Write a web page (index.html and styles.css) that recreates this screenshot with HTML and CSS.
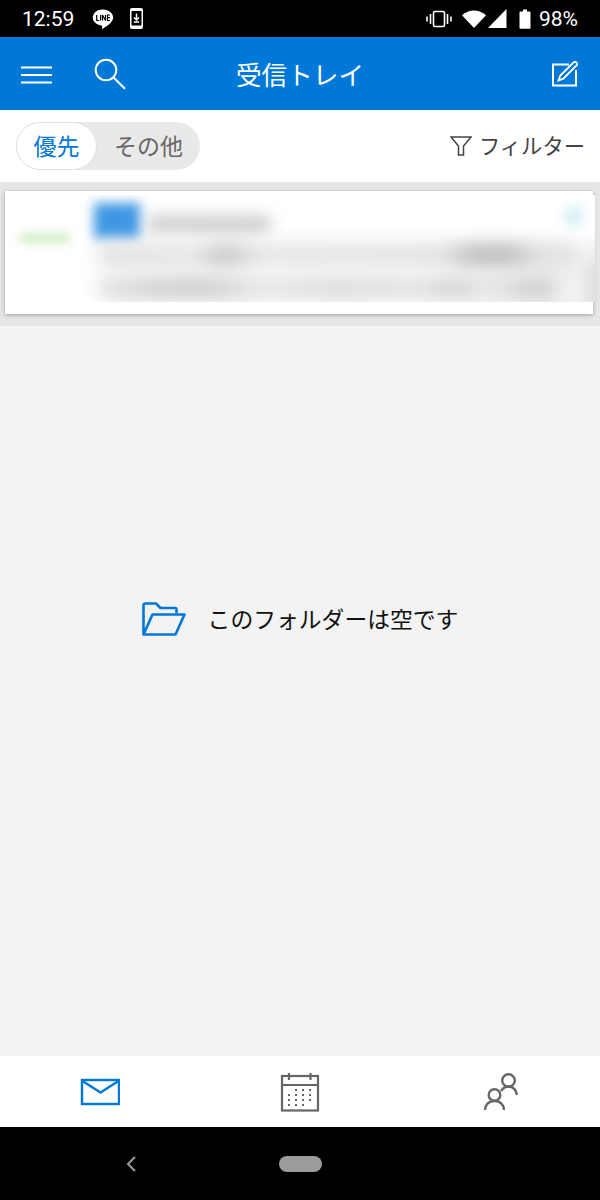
FILE: index.html
```html
<!DOCTYPE html>
<html lang="ja">
<head>
    <meta charset="UTF-8">
    <meta name="viewport" content="width=device-width, initial-scale=1.0">
    <title>受信トレイ</title>
    <link rel="stylesheet" href="styles.css">
</head>
<body>
    <div class="status-bar">
        <div class="status-left">
            <span class="clock">12:59</span>
            <svg class="line-icon" width="22" height="22" viewBox="0 0 22 22">
                <path d="M11 1.500C5.200 1.500.8 5 .8 9.600c0 4.200 3.700 7.400 8.600 7.900.6.100.8.400.7 1l-.2 1.900c0 .4.300.5.700.3 2.600-1.400 9.900-5.500 10.600-10.600C21.200 5 16.800 1.500 11 1.500z" fill="#fff"/>
                <path d="M4.700 7v5.500h2.500M8.600 7v5.500M10.500 12.500V7l3 5.500V7M18 7h-2.500v5.500H18M15.500 9.700H18" fill="none" stroke="#000" stroke-width="1.200"/>
            </svg>
            <svg width="16" height="24" viewBox="0 0 16 24">
                <rect x="1" y="1" width="13" height="21" rx="2" fill="#fff"/>
                <rect x="2.500" y="4" width="10" height="14.500" fill="#000"/>
                <path d="M7.500 6.500v6M5 10.500l2.500 2.500 2.500-2.500M4.800 15h5.400" fill="none" stroke="#fff" stroke-width="1.500"/>
            </svg>
        </div>
        <div class="status-right">
            <svg width="26" height="20" viewBox="0 0 26 20">
                <rect x="7.500" y="2.500" width="11" height="15" rx="1.500" fill="none" stroke="#fff" stroke-width="1.600"/>
                <path d="M4.500 5v10M21.500 5v10M1 7.500v5M25 7.500v5" stroke="#fff" stroke-width="1.600"/>
            </svg>
            <svg class="wifi-icon" width="24" height="18" viewBox="0 0 24 18">
                <path d="M0 5.200C6.800-1.200 17.200-1.200 24 5.200L12 18z" fill="#fff"/>
            </svg>
            <svg class="signal-icon" width="19" height="19" viewBox="0 0 19 19">
                <path d="M0 19L18.500 0v19z" fill="#fff"/>
            </svg>
            <svg class="battery-icon" width="12" height="20" viewBox="0 0 12 20">
                <path d="M1.500 2.500H4V0.500h4v2h2.500a1 1 0 0 1 1 1V18.800a1 1 0 0 1-1 1h-9a1 1 0 0 1-1-1V3.500a1 1 0 0 1 1-1z" fill="#fff"/>
            </svg>
            <span class="battery-text">98%</span>
        </div>
    </div>

    <header class="app-bar">
        <div class="app-bar-left">
            <svg class="menu-icon" width="31" height="18" viewBox="0 0 31 18">
                <path d="M0 1.500h31M0 9h31M0 16.500h31" stroke="#fff" stroke-width="2"/>
            </svg>
            <svg width="32" height="32" viewBox="0 0 32 32">
                <circle cx="12" cy="12" r="10.300" fill="none" stroke="#fff" stroke-width="2"/>
                <path d="M19.500 19.500L31 30.800" stroke="#fff" stroke-width="2"/>
            </svg>
        </div>
        <h1 class="app-title">受信トレイ</h1>
        <svg class="compose-icon" width="26" height="26" viewBox="0 0 26 26">
            <path d="M17 3.500H1v21h23V9" fill="none" stroke="#fff" stroke-width="2"/>
            <path d="M6.500 19.500l1.800-5L21.500 1.500c1-.8 2.200-.7 3 .1s.8 2 0 2.900L11.300 17.700z" fill="none" stroke="#fff" stroke-width="1.800"/>
        </svg>
    </header>

    <div class="filter-row">
        <div class="pivot">
            <span class="pivot-item active">優先</span>
            <span class="pivot-item">その他</span>
        </div>
        <div class="filter">
            <svg width="22" height="20" viewBox="0 0 22 20">
                <path d="M1 1h20l-7.500 9v9h-5v-9z" fill="none" stroke="#444" stroke-width="1.500"/>
            </svg>
            <span class="filter-label">フィルター</span>
        </div>
    </div>

    <div class="card-band">
        <div class="card">
            <div class="blur-panel">
                <div class="blur-green"></div>
                <div class="blur-body">
                    <div class="blur-head">
                        <div class="blur-avatar"></div>
                        <div class="blur-name"></div>
                        <div class="blur-dot"></div>
                    </div>
                    <div class="blur-line"></div>
                    <div class="blur-line short"></div>
                </div>
            </div>
        </div>
    </div>

    <main class="empty">
        <svg width="44" height="34" viewBox="0 0 44 34">
            <path d="M1.500 32.500V3a1.500 1.500 0 0 1 1.500-1.500h11l4.500 4.500h14.500a1.500 1.500 0 0 1 1.500 1.500v3.500M1.500 32.500h32L42.500 12.500H10.500z" fill="none" stroke="#0078d7" stroke-width="2.600" stroke-linejoin="round"/>
        </svg>
        <span class="empty-text">このフォルダーは空です</span>
    </main>

    <nav class="tab-bar">
        <svg width="40" height="28" viewBox="0 0 40 28">
            <rect x="2" y="2" width="37" height="24" fill="none" stroke="#0078d7" stroke-width="2.400"/>
            <path d="M2.500 3L20.500 14.500l18-11.500" fill="none" stroke="#0078d7" stroke-width="2.400"/>
        </svg>
        <svg width="40" height="40" viewBox="0 0 40 40">
            <rect x="2" y="4" width="36" height="34.500" fill="none" stroke="#666" stroke-width="2.200"/>
            <path d="M2 13h36M9 1v7M30.500 1v7" stroke="#666" stroke-width="2.200"/>
            <path d="M15 18h2M22 18h2M29 18h2M8 23h2M15 23h2M22 23h2M29 23h2M8 28h2M15 28h2M22 28h2M29 28h2M8 33h2M15 33h2M22 33h2" stroke="#666" stroke-width="2.200"/>
        </svg>
        <svg width="36" height="40" viewBox="0 0 36 40">
            <circle cx="12.500" cy="23" r="5.800" fill="none" stroke="#666" stroke-width="2.400"/>
            <path d="M3 38c0-5 3.500-9 9.500-9s9.500 4 9.500 9" fill="none" stroke="#666" stroke-width="2.400"/>
            <circle cx="26.500" cy="8.500" r="6.300" fill="none" stroke="#666" stroke-width="2.400"/>
            <path d="M19 19c2-3 4.500-4.500 7.500-4.500 4.500 0 7.500 3.500 8.500 8.500" fill="none" stroke="#666" stroke-width="2.400"/>
        </svg>
    </nav>

    <div class="nav-bar">
        <svg class="nav-back" width="12" height="18" viewBox="0 0 12 18">
            <path d="M10 2L3 9l7 7" fill="none" stroke="#9b9b9b" stroke-width="2"/>
        </svg>
        <div class="nav-home"></div>
    </div>
</body>
</html>
```

FILE: styles.css
```css
* {
    box-sizing: border-box;
}

body {
    margin: 0;
    width: 600px;
    height: 1200px;
    display: flex;
    flex-direction: column;
    overflow: hidden;
    background-color: #f3f3f3;
    font-family: "Noto Sans CJK JP", "Noto Sans", sans-serif;
}

.status-bar {
    height: 37px;
    background-color: #000;
    color: #fff;
    display: flex;
    justify-content: space-between;
    align-items: center;
    padding: 0 22px;
    font-family: Roboto, sans-serif;
    font-size: 21px;
}

.status-left,
.status-right {
    display: flex;
    align-items: center;
}

.status-left {
    gap: 15px;
}

.clock {
    margin-right: 3px;
}

.wifi-icon {
    margin-left: 10px;
}

.signal-icon {
    margin-left: 2px;
}

.battery-icon {
    margin: 0 8px 0 12px;
}

.app-bar {
    height: 73px;
    background-color: #0078d7;
    display: flex;
    justify-content: space-between;
    align-items: center;
    padding: 0 22px 0 21px;
    position: relative;
}

.app-bar-left {
    display: flex;
    align-items: center;
    gap: 42px;
}

.menu-icon {
    margin-top: 2px;
}

.app-title {
    margin: 0;
    color: #fff;
    font-size: 25.600px;
    font-weight: 400;
    position: absolute;
    left: 236px;
    top: 18px;
    line-height: 37px;
}

.filter-row {
    height: 72px;
    background-color: #fff;
    display: flex;
    justify-content: space-between;
    align-items: center;
    padding: 0 15px 0 16px;
}

.pivot {
    display: flex;
    height: 48px;
    width: 184px;
    border-radius: 24px;
    background-color: #e9e9e9;
    font-size: 23px;
    color: #666;
}

.pivot-item {
    display: flex;
    align-items: center;
    justify-content: center;
    flex: 1;
    padding-bottom: 2px;
}

.pivot-item.active {
    flex: none;
    width: 81px;
    background-color: #fff;
    border: 1px solid #e2e2e2;
    border-radius: 24px;
    color: #0078d7;
}

.filter {
    display: flex;
    align-items: center;
    gap: 7px;
    font-size: 21.300px;
    color: #444;
    margin-top: -1px;
}

.filter-label {
    padding-bottom: 3px;
}

.card-band {
    height: 144px;
    background-color: #e6e6e6;
    padding: 9px 7px 12px 5px;
}

.card {
    height: 123px;
    padding-top: 4px;
    background-color: #fff;
    box-shadow: 0 1px 4px rgba(0, 0, 0, 0.3);
}

.blur-panel {
    height: 107px;
    margin-right: -2px;
    padding-left: 15px;
    display: flex;
    align-items: flex-start;
    background: linear-gradient(to bottom, #fff 35%, rgba(255, 255, 255, 0) 70%), linear-gradient(to right, #fff 75%, #f1f1f1 97%, #dfe0e2);
    overflow: hidden;
}

.blur-green {
    width: 50px;
    height: 10px;
    margin-top: 38px;
    background-color: #d3eec5;
    filter: blur(5px);
}

.blur-body {
    flex: 1;
    margin-left: 24px;
    display: flex;
    flex-direction: column;
}

.blur-head {
    height: 40px;
    margin-top: 6px;
    display: flex;
    align-items: center;
}

.blur-avatar {
    width: 46px;
    height: 36px;
    background-color: #3f97e3;
    filter: blur(6px);
}

.blur-name {
    width: 122px;
    height: 16px;
    margin: 6px 0 0 8px;
    background-color: #c8c8c8;
    filter: blur(8px);
}

.blur-dot {
    width: 18px;
    height: 18px;
    margin: -10px 12px 0 auto;
    background-color: #d5eef6;
    filter: blur(6px);
}

.blur-line {
    height: 24px;
    width: 478px;
    margin: 2px 0 0 5px;
    background: linear-gradient(to right, #e0e0e0, #e6e6e6 20%, #c4c4c4 26%, #e6e6e6 34%, #e2e2e2 72%, #bcbcbc 78%, #bcbcbc 86%, #e0e0e0 92%);
    filter: blur(9px);
}

.blur-line.short {
    margin-top: 9px;
    width: 456px;
    background: linear-gradient(to right, #e2e2e2, #d0d0d0 14%, #cecece 24%, #e6e6e6 36%, #dcdcdc 52%, #e2e2e2 70%, #d2d2d2 78%, #e6e6e6 85%, #d0d0d0 95%);
}

.empty {
    flex: 1;
    display: flex;
    justify-content: center;
    align-items: center;
    gap: 22px;
    padding: 0 2px 145px 2px;
}

.empty-text {
    font-size: 22.800px;
    color: #111;
}

.tab-bar {
    height: 71px;
    background-color: #fff;
    display: grid;
    grid-template-columns: 1fr 1fr 1fr;
    justify-items: center;
    align-items: center;
}

.nav-bar {
    height: 73px;
    background-color: #000;
    display: flex;
    justify-content: center;
    align-items: center;
    position: relative;
}

.nav-back {
    position: absolute;
    left: 125px;
    top: 28px;
}

.nav-home {
    width: 43px;
    height: 16px;
    border-radius: 8px;
    background-color: #9b9b9b;
}
```
